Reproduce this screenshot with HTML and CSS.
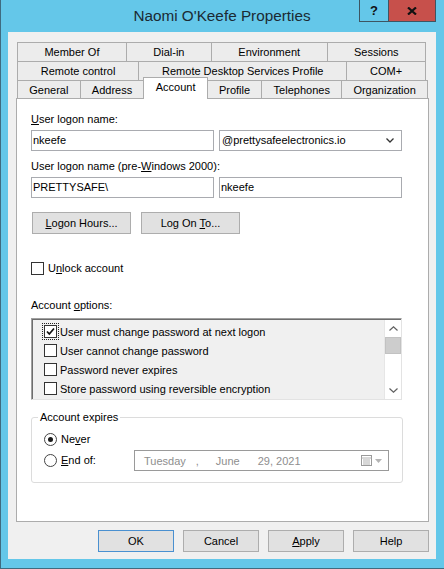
FILE: index.html
```html
<!DOCTYPE html>
<html>
<head>
<meta charset="utf-8">
<title>Naomi O'Keefe Properties</title>
<link rel="stylesheet" href="styles.css">
</head>
<body>
<div class="window">
  <div class="titlebar">
    <div class="tb-spacer"></div>
    <div class="title">Naomi O'Keefe Properties</div>
    <div class="caption-btns">
      <div class="cap help">?</div>
      <div class="cap close">
        <svg width="10" height="8" viewBox="0 0 10 8"><path d="M1 0.5 L9 7.5 M9 0.5 L1 7.5" stroke="#111" stroke-width="2.2" fill="none"/></svg>
      </div>
    </div>
  </div>

  <div class="client">
    <div class="tabs">
      <div class="tabrow back">
        <div class="tab">Member Of</div>
        <div class="tab">Dial-in</div>
        <div class="tab">Environment</div>
        <div class="tab">Sessions</div>
      </div>
      <div class="tabrow back">
        <div class="tab">Remote control</div>
        <div class="tab">Remote Desktop Services Profile</div>
        <div class="tab">COM+</div>
      </div>
      <div class="tabrow front">
        <div class="tab">General</div>
        <div class="tab">Address</div>
        <div class="tab sel">Account</div>
        <div class="tab">Profile</div>
        <div class="tab">Telephones</div>
        <div class="tab">Organization</div>
      </div>
    </div>

    <div class="panel">
      <div class="lbl"><u>U</u>ser logon name:</div>
      <div class="pair">
        <div class="field">nkeefe</div>
        <div class="field combo">
          <span>@prettysafeelectronics.io</span>
          <svg class="chev" width="8" height="5" viewBox="0 0 8 5"><path d="M0.5 0.5 L4 4 L7.5 0.5" stroke="#333" stroke-width="1.3" fill="none"/></svg>
        </div>
      </div>
      <div class="lbl lbl2">User logon name (pre-<u>W</u>indows 2000):</div>
      <div class="pair">
        <div class="field">PRETTYSAFE\</div>
        <div class="field">nkeefe</div>
      </div>
      <div class="btnrow">
        <div class="btn"><u>L</u>ogon Hours...</div>
        <div class="btn">Log On <u>T</u>o...</div>
      </div>

      <div class="checkrow unlock">
        <span class="chk"></span>
        <span>U<u>n</u>lock account</span>
      </div>

      <div class="lbl lbl3">Account <u>o</u>ptions:</div>
      <div class="list">
        <div class="items">
          <div class="opt">
            <span class="chk focus"><svg width="11" height="11" viewBox="0 0 11 11"><path d="M2 5.5 L4.3 8 L9 2.5" stroke="#111" stroke-width="1.7" fill="none"/></svg></span>
            <span>User must change password at next logon</span>
          </div>
          <div class="opt"><span class="chk"></span><span>User cannot change password</span></div>
          <div class="opt"><span class="chk"></span><span>Password never expires</span></div>
          <div class="opt"><span class="chk"></span><span>Store password using reversible encryption</span></div>
        </div>
        <div class="scrollbar">
          <div class="sb-btn"><svg width="9" height="5" viewBox="0 0 9 5"><path d="M0.5 4.5 L4.5 0.8 L8.5 4.5" stroke="#606060" stroke-width="1.2" fill="none"/></svg></div>
          <div class="sb-thumb"></div>
          <div class="sb-track"></div>
          <div class="sb-btn"><svg width="9" height="5" viewBox="0 0 9 5"><path d="M0.5 0.5 L4.5 4.2 L8.5 0.5" stroke="#606060" stroke-width="1.2" fill="none"/></svg></div>
        </div>
      </div>

      <fieldset class="expires">
        <legend>Account expires</legend>
        <div class="exp-grid">
          <div class="radio"><span class="rad on"></span><span>Ne<u>v</u>er</span></div>
          <div class="radio r2"><span class="rad"></span><span><u>E</u>nd of:</span></div>
          <div class="date">
            <span>Tuesday</span><span class="d-comma">,</span><span class="d-month">June</span><span class="d-day">29, 2021</span>
            <svg class="cal" width="11" height="11" viewBox="0 0 11 11">
              <rect x="0.5" y="0.5" width="10" height="10" fill="#fff" stroke="#9a9a9a"/>
              <path d="M0.5 3 H10.5 M2 5 H9 M2 7 H9 M2 9 H9" stroke="#b0b0b0" stroke-width="1"/>
            </svg>
            <svg class="drop" width="7" height="4" viewBox="0 0 7 4"><path d="M0 0 H7 L3.5 4 Z" fill="#b4b4b4"/></svg>
          </div>
        </div>
      </fieldset>
    </div>

    <div class="dlg-buttons">
      <div class="dbtn default">OK</div>
      <div class="dbtn">Cancel</div>
      <div class="dbtn"><u>A</u>pply</div>
      <div class="dbtn">Help</div>
    </div>
  </div>
</div>
</body>
</html>
```

FILE: styles.css
```css
* { box-sizing: border-box; }
html, body { margin: 0; padding: 0; }
body {
  font-family: "Liberation Sans", Arial, sans-serif;
  font-size: 11px;
  color: #000;
  background: #fff;
}
u { text-decoration: underline; text-underline-offset: 1px; }

.window {
  width: 444px;
  height: 569px;
  background: #64c7e9;
  border-left: 1px solid #3f6b80;
  border-bottom: 1px solid #3f6b80;
  padding: 0 8px 9px 7px;
  display: flex;
  flex-direction: column;
}

/* title bar */
.titlebar {
  height: 32px;
  flex: none;
  display: grid;
  grid-template-columns: 1fr auto 1fr;
}
.title {
  font-size: 15.3px;
  line-height: 32px;
  color: #1b2a33;
  white-space: nowrap;
}
.caption-btns {
  justify-self: end;
  align-self: start;
  display: flex;
  height: 22px;
  border: 1px solid #3d5562;
  border-top: 0;
}
.cap {
  display: flex;
  align-items: center;
  justify-content: center;
  height: 21px;
}
.cap.help {
  width: 29px;
  border-right: 1px solid #3d5562;
  font-weight: bold;
  font-size: 13px;
  color: #111;
}
.cap.close {
  width: 46px;
  background: #c7504b;
}

/* client area */
.client {
  flex: 1;
  background: #f0f0f0;
  padding: 10px 7px 0 8px;
  display: flex;
  flex-direction: column;
}

.tabs { margin-left: 1px; width: 411px; }
.tabrow { display: flex; height: 19px; }
.tabrow.back { width: 409px; }
.tabrow.front { height: 18px; align-items: flex-end; }
.tab {
  flex: 1 1 auto;
  height: 19px;
  border: 1px solid #acacac;
  border-bottom: 0;
  background: #ececec;
  text-align: center;
  line-height: 18px;
  padding: 0 4px;
  white-space: nowrap;
}
.tab + .tab { margin-left: -1px; }
.front .tab { height: 18px; line-height: 18px; }
.front .tab.sel {
  height: 22px;
  margin-bottom: -1px;
  background: #fff;
  position: relative;
  z-index: 1;
  line-height: 19px;
}

.panel {
  width: 413px;
  height: 424px;
  flex: none;
  background: #fff;
  border: 1px solid #acacac;
  padding: 14px 26px 0 14px;
}

.lbl { line-height: 13px; }
.lbl2 { margin-top: 9px; }
.pair {
  display: grid;
  grid-template-columns: 183px 183px;
  column-gap: 5px;
  margin-top: 4px;
}
.field {
  height: 21px;
  border: 1px solid #a9abb0;
  background: #fff;
  padding: 0 1px;
  line-height: 19px;
  white-space: nowrap;
}
.field.combo {
  display: flex;
  align-items: center;
  justify-content: space-between;
  padding: 0 7px 0 2px;
}
.chev { display: block; }

.btnrow {
  display: flex;
  gap: 10px;
  margin-top: 14px;
  padding-left: 1px;
}
.btn {
  width: 99px;
  height: 22px;
  border: 1px solid #adadad;
  background: #e1e1e1;
  text-align: center;
  line-height: 20px;
}

.checkrow {
  display: flex;
  align-items: center;
  gap: 4px;
  height: 13px;
  line-height: 13px;
}
.unlock { margin-top: 28px; }

.chk {
  flex: none;
  width: 13px;
  height: 13px;
  border: 1px solid #333;
  background: #fff;
  display: flex;
  align-items: center;
  justify-content: center;
}
.chk.focus { outline: 1px dotted #222; outline-offset: 1px; }

.lbl3 { margin-top: 24px; }

.list {
  margin-top: 6px;
  height: 82px;
  display: flex;
  background: #f0f0f0;
  border: 1px solid;
  border-color: #a0a0a0 #e3e3e3 #e3e3e3 #a0a0a0;
  box-shadow: inset 1px 1px 0 #6d6d6d;
}
.items {
  flex: 1;
  padding-top: 3px;
}
.opt {
  display: flex;
  align-items: center;
  gap: 3px;
  height: 19px;
  padding-left: 12px;
  white-space: nowrap;
}
.scrollbar {
  width: 17px;
  display: flex;
  flex-direction: column;
  background: #fff;
  border-left: 1px solid #e6e6e6;
  margin-top: 1px;
}
.sb-btn {
  height: 17px;
  flex: none;
  display: flex;
  align-items: center;
  justify-content: center;
}
.sb-thumb {
  height: 17px;
  flex: none;
  background: #cdcdcd;
  border: 1px solid #c2c2c2;
}
.sb-track { flex: 1; }

.expires {
  margin: 11px 0 0;
  padding: 8px 13px 11px 12px;
  border: 1px solid #dcdcdc;
  border-radius: 3px;
}
.expires legend {
  padding: 0 2px;
  margin-left: -6px;
  line-height: 13px;
}
.exp-grid {
  display: grid;
  grid-template-columns: 90px 255px;
  grid-template-rows: 14px 21px;
  row-gap: 4px;
}
.radio {
  display: flex;
  align-items: center;
  gap: 4px;
  line-height: 13px;
}
.r2 { grid-row: 2; grid-column: 1; }
.rad {
  flex: none;
  width: 13px;
  height: 13px;
  border-radius: 50%;
  border: 1px solid #444;
  background: #fff;
  display: flex;
  align-items: center;
  justify-content: center;
}
.rad.on::after {
  content: "";
  width: 5px;
  height: 5px;
  border-radius: 50%;
  background: #1a1a1a;
}
.date {
  grid-row: 2;
  grid-column: 2;
  display: flex;
  align-items: center;
  border: 1px solid #9a9a9a;
  background: #fff;
  color: #8e8e8e;
  padding: 0 6px 0 9px;
  white-space: nowrap;
}
.d-comma { margin-left: 10px; }
.d-month { margin-left: 17px; }
.d-day { margin-left: 18px; }
.cal { margin-left: auto; display: block; }
.drop { margin-left: 3px; display: block; }

.dlg-buttons {
  display: flex;
  justify-content: flex-end;
  gap: 9px;
  margin-top: 8px;
}
.dbtn {
  width: 76px;
  height: 22px;
  border: 1px solid #adadad;
  background: #e1e1e1;
  text-align: center;
  line-height: 20px;
}
.dbtn.default { border-color: #4a90d0; }
```
